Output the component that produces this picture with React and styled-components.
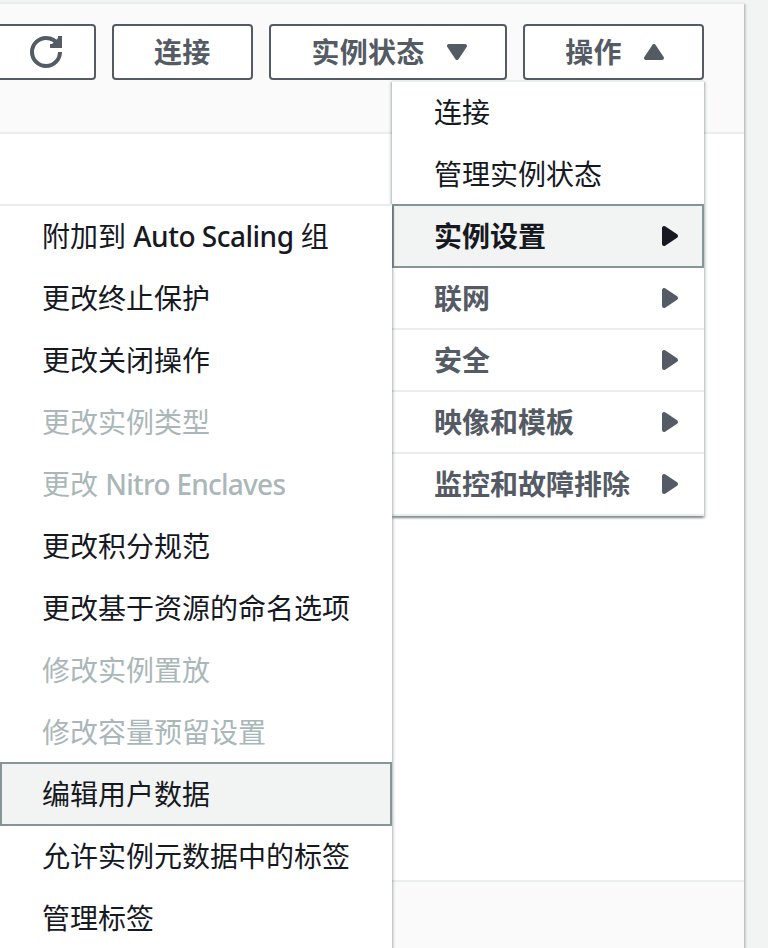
import React from "react";
import styled, { createGlobalStyle, css } from "styled-components";

const GlobalStyle = createGlobalStyle`
  *, *::before, *::after { box-sizing: border-box; }
  body {
    margin: 0;
    background: #f2f3f3;
    overflow: hidden;
    font-family: "Noto Sans", "Noto Sans CJK SC", sans-serif;
    font-size: 28px;
    line-height: 44px;
    color: #16191f;
  }
`;

const floatShadow = css`
  box-shadow:
    0 2px 2px 0 rgba(0, 28, 36, 0.3),
    2px 2px 2px 0 rgba(0, 28, 36, 0.15),
    -2px 2px 2px 0 rgba(0, 28, 36, 0.15);
`;

const Page = styled.div`
  height: 948px;
  padding-top: 2px;
  overflow: hidden;
`;

const Panel = styled.section`
  display: flex;
  flex-direction: column;
  width: 744px;
  height: 1000px;
  background: #ffffff;
  border-top: 2px solid #eaeded;
  ${floatShadow}
`;

const PanelHeader = styled.header`
  height: 130px;
  padding: 20px 40px 0 0;
  background: #fafafa;
  border-bottom: 2px solid #eaeded;
`;

const PanelBody = styled.div`
  height: 746px;
`;

const PanelFooter = styled.footer`
  flex: 1;
  background: #fafafa;
  border-top: 2px solid #eaeded;
`;

const Toolbar = styled.div`
  display: flex;
  justify-content: flex-end;
  gap: 16px;
`;

const Button = styled.button`
  display: flex;
  align-items: center;
  width: ${(p) => p.$width}px;
  height: 56px;
  flex: none;
  padding: 0 0 0 40px;
  border: 2px solid #545b64;
  border-radius: 4px;
  background: #ffffff;
  color: #545b64;
  font: inherit;
  font-weight: 700;
  letter-spacing: 0.2px;
  line-height: 40px;
  white-space: nowrap;
`;

const IconButton = styled(Button)`
  justify-content: flex-end;
  padding: 0 32px 0 0;
`;

const ButtonLabel = styled.span`
  flex: none;
  width: ${(p) => p.$width}px;
`;

const Icon = styled.svg`
  display: block;
  flex: none;
  width: 32px;
  height: 32px;
  margin-left: ${(p) => p.$gap || 0}px;
  stroke: currentColor;
  stroke-width: 2;
`;

const MenuAnchor = styled.div`
  position: relative;
`;

const Menu = styled.ul`
  position: absolute;
  top: 56px;
  right: 0;
  z-index: 2;
  width: 312px;
  margin: 0;
  padding: 0;
  list-style: none;
  background: #ffffff;
  ${floatShadow}
`;

const SubMenu = styled(Menu)`
  top: 0;
  right: 312px;
  width: 392px;
`;

const MenuEntry = styled.li`
  position: relative;
  z-index: ${(p) => (p.$selected ? 1 : 0)};
  & + & {
    margin-top: -2px;
  }
`;

const MenuItem = styled.div`
  display: flex;
  align-items: center;
  justify-content: space-between;
  height: 64px;
  padding: 0 18px 0 42px;
  border: solid transparent;
  border-width: 2px 0;
  white-space: nowrap;
  font-weight: 400;
  color: ${(p) => (p.$disabled ? "#aab7b8" : "#16191f")};
  ${(p) =>
    p.$first &&
    css`
      border-top-color: #eaeded;
    `}
  ${(p) =>
    p.$category &&
    css`
      font-weight: 700;
      color: #545b64;
      border-bottom-color: #eaeded;
    `}
  ${(p) =>
    p.$selected &&
    css`
      padding: 0 16px 0 40px;
      color: #16191f;
      background: #f2f3f3;
      border: 2px solid #879596;
    `}
`;

const Latin = styled.span`
  font-family: "Noto Sans", sans-serif;
  font-weight: 500;
  letter-spacing: ${(p) => p.$tracking}px;
`;

const RefreshIcon = () => (
  <Icon viewBox="0 0 16 16" fill="none">
    <path d="M10 5h5V0" fill="currentColor" />
    <path d="M15 8A7 7 0 1 1 8 1C10.8 1 13.1 2.4 14.4 4.8" />
  </Icon>
);

const caretPaths = {
  down: "M4 5h8l-4 6z",
  up: "M4 11h8L8 5z",
  right: "M5 4v8l6-4z",
};

const Caret = ({ direction, gap }) => (
  <Icon viewBox="0 0 16 16" fill="currentColor" strokeLinejoin="round" $gap={gap}>
    <path d={caretPaths[direction]} />
  </Icon>
);

const settings = [
  { label: ["附加到 ", "Auto Scaling", " 组"], tracking: -0.5 },
  { label: "更改终止保护" },
  { label: "更改关闭操作" },
  { label: "更改实例类型", disabled: true },
  { label: ["更改 ", "Nitro Enclaves", ""], tracking: -0.76, disabled: true },
  { label: "更改积分规范" },
  { label: "更改基于资源的命名选项" },
  { label: "修改实例置放", disabled: true },
  { label: "修改容量预留设置", disabled: true },
  { label: "编辑用户数据", selected: true },
  { label: "允许实例元数据中的标签" },
  { label: "管理标签" },
];

const actions = [
  { label: "连接" },
  { label: "管理实例状态" },
  { label: "实例设置", category: true, selected: true, children: settings },
  { label: "联网", category: true },
  { label: "安全", category: true },
  { label: "映像和模板", category: true },
  { label: "监控和故障排除", category: true },
];

const Label = ({ item }) =>
  Array.isArray(item.label) ? (
    <span>
      {item.label[0]}
      <Latin $tracking={item.tracking}>{item.label[1]}</Latin>
      {item.label[2]}
    </span>
  ) : (
    <span>{item.label}</span>
  );

const Entries = ({ items }) =>
  items.map((item, i) => (
    <MenuEntry key={i} $selected={item.selected}>
      <MenuItem
        $first={i === 0}
        $category={item.category}
        $selected={item.selected}
        $disabled={item.disabled}
      >
        <Label item={item} />
        {item.category && <Caret direction="right" />}
      </MenuItem>
      {item.children && (
        <SubMenu>
          <Entries items={item.children} />
        </SubMenu>
      )}
    </MenuEntry>
  ));

export default function App() {
  return (
    <Page>
      <GlobalStyle />
      <Panel>
        <PanelHeader>
          <Toolbar>
            <IconButton $width={128} aria-label="刷新">
              <RefreshIcon />
            </IconButton>
            <Button $width={141}>连接</Button>
            <Button $width={238}>
              <ButtonLabel $width={114}>实例状态</ButtonLabel>
              <Caret direction="down" gap={16} />
            </Button>
            <MenuAnchor>
              <Button $width={181}>
                <ButtonLabel $width={57}>操作</ButtonLabel>
                <Caret direction="up" gap={16} />
              </Button>
              <Menu>
                <Entries items={actions} />
              </Menu>
            </MenuAnchor>
          </Toolbar>
        </PanelHeader>
        <PanelBody />
        <PanelFooter />
      </Panel>
    </Page>
  );
}
